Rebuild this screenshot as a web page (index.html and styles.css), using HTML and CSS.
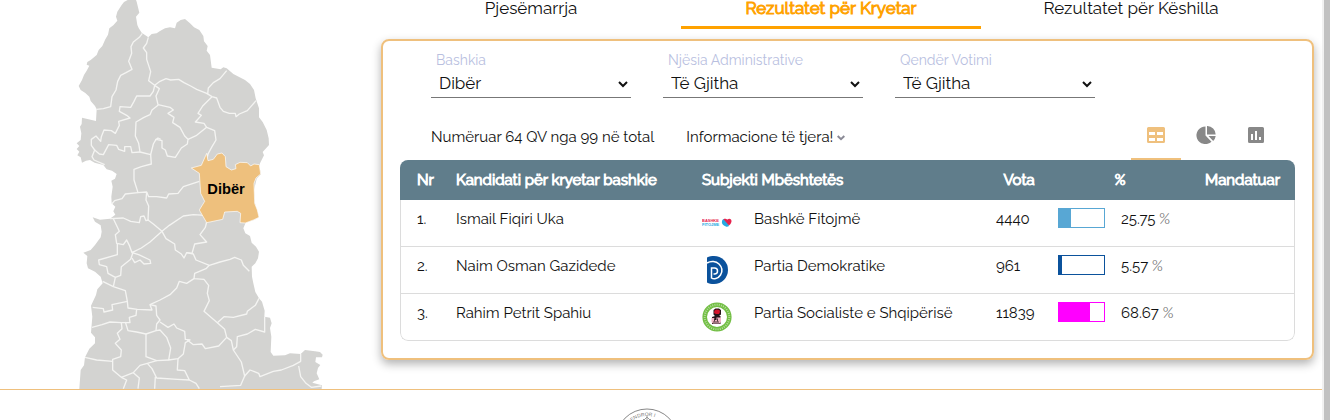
FILE: index.html
```html
<!DOCTYPE html>
<html lang="sq">
<head>
<meta charset="UTF-8" />
<meta name="viewport" content="width=device-width, initial-scale=1" />
<title>Rezultatet për Kryetar</title>
<link rel="stylesheet" href="styles.css">
</head>

<body>

<div class="page">
  <main class="main">

    <!-- Harta -->
    <div class="map-col">
      <svg class="map" viewBox="0 0 900 1167" role="img" aria-label="Harta e bashkive">
        <path class="land" d="M203 0L192 6 185 15 172 35 168 50 172 62 160 76 148 85 144 104 136 118 127 138 116 150 110 165 92 180 82 186 80 194 88 197 80 212 72 225 66 240 56 258 62 270 76 279 88 290 92 303 105 318 110 328 108 363 66 353 65 372 60 380 64 400 62 420 50 430 58 438 50 447 58 455 52 466 62 472 66 488 78 482 90 480 104 488 130 495 140 508 156 512 170 522 165 536 154 542 158 560 154 590 155 610 166 620 160 634 166 644 150 656 120 659 98 652 105 665 122 676 125 695 122 712 105 735 92 750 70 758 82 768 80 790 84 805 105 815 122 830 128 850 112 868 108 885 93 917 97 950 93 998 105 1012 105 1030 88 1046 75 1072 72 1096 62 1110 58 1167 785 1167 786 1156 757 1148 762 1144 778 1138 770 1120 774 1104 781 1095 766 1086 768 1072 786 1072 788 1064 780 1056 765 1054 735 1050 722 1062 690 1060 675 1066 640 1067 632 1056 634 1010 630 984 635 970 630 953 613 950 614 932 606 905 597 895 586 876 580 850 576 830 575 800 586 790 594 775 597 755 588 740 575 728 570 708 556 700 550 685 557 668 582 660 597 652 590 630 585 610 582 570 590 536 603 522 598 500 600 490 612 466 608 456 627 435 626 415 620 390 608 366 597 352 597 325 587 295 582 270 570 252 555 240 520 222 500 205 490 202 482 208 455 203 450 165 440 152 443 138 432 124 430 108 418 90 402 82 390 70 375 57 362 60 350 68 345 85 330 82 315 85 300 93 290 100 275 102 265 112 245 98 236 84 232 75 228 50 238 38 230 5 228 0Z"/>
        <g class="borders">
          <path d="M247 100L238 112 220 126 213 140 215 160 206 184 216 208 198 218 182 226 173 244 168 270 156 290 152 320 130 326 110 328"/>
          <path d="M265 112L260 130 250 144 260 158 260 178 272 215 266 242 284 256 300 244 318 236 332 240 356 238 372 248 392 258 410 268 440 280 456 290 470 294 480 322 490 334 508 340 526 340 528 350 538 342 562 332 588 302"/>
          <path d="M500 212L480 236 460 248 445 264 443 282"/>
          <path d="M284 256L280 274 270 288 230 288 222 304 212 322 180 320 178 334 200 346 210 354 176 364 178 376 166 400 154 392 132 390 124 410 122 424 108 408 94 418 94 436 104 450 96 470 102 480 134 494"/>
          <path d="M284 256L298 266 288 288 294 314 330 322 340 330 324 340 342 352 338 368 360 382 374 408 384 418 382 432 364 444 346 472 322 468 316 450 306 444 306 422 288 418 280 432 272 464 240 456 236 430 226 408 228 366 252 352 270 344 276 330 294 316"/>
          <path d="M286 420L294 414 302 418"/>
          <path d="M456 290L428 318 414 340 424 346 406 366 432 370 440 382 464 392 468 420 456 440 444 462 440 480"/>
          <path d="M440 382L410 406 384 418"/>
          <path d="M104 450L118 462 130 464 146 434 170 436 176 448 194 454 194 440 212 440 216 458 240 456"/>
          <path d="M272 464L274 492 244 500 222 508 222 540 234 578 260 576 266 590 290 590 320 594 326 582 354 580 370 560 418 544"/>
          <path d="M234 578L196 582 186 596 164 602 155 612"/>
          <path d="M260 576L258 600 266 618 264 660 280 672 306 694 328 676 370 648 400 644 438 646"/>
          <path d="M150 656L190 654 212 664 238 668 242 650 252 648 258 662 266 660"/>
          <path d="M160 656L178 694 166 704 170 730 190 734 200 720 208 736 216 758 244 744 270 726 306 694"/>
          <path d="M306 694L318 716 344 732 346 750 364 762 372 774 380 758 396 760 404 732 440 726 420 704 436 682 440 666"/>
          <path d="M380 758L400 762 408 780 448 796 480 786 510 778 524 772 544 780 550 796 568 814"/>
          <path d="M448 796L438 806 404 820 402 836 432 838 446 856 442 880 448 902 432 934 472 968 494 988 500 1012 514 1022 520 1050 544 1086 554 1128 542 1156 480 1160"/>
          <path d="M402 836L380 850 358 844 350 864 330 884 300 900 270 914 276 930 232 928 204 924 202 904 196 872 160 860 128 844"/>
          <path d="M172 730L172 764 116 780 118 794 140 800 144 820 166 832 160 860"/>
          <path d="M166 832L182 826 184 800 212 778 220 754"/>
          <path d="M216 758L236 764 270 780 272 790 252 792 240 780 224 788 216 774"/>
          <path d="M202 904L156 914 158 930 132 936 130 926 98 922"/>
          <path d="M230 928L228 946 208 952 210 968 184 968 150 966 126 974 96 982"/>
          <path d="M270 914L288 918 290 946 300 960 290 972 288 992 258 1002 230 996 204 992 196 966"/>
          <path d="M300 966L324 982 342 972 350 984 374 994 376 1018 390 1020 376 1028 370 1062 354 1076 326 1080 332 1044 320 1012 300 990 288 992"/>
          <path d="M258 1002L258 1070 290 1082 326 1080"/>
          <path d="M382 1020L400 1034 426 1032 436 1046 476 1038 500 1012"/>
          <path d="M184 968L186 986 172 1000 180 1018 166 1030 184 1050 182 1070 158 1078 158 1110 184 1132 220 1118 240 1096 262 1090 290 1082"/>
          <path d="M75 1072L110 1080 158 1084"/>
          <path d="M354 1076L352 1110 374 1112 388 1140 352 1138 290 1134 276 1106 262 1090"/>
          <path d="M388 1140L408 1150 418 1166M220 1118L238 1134 234 1166M184 1132L200 1140 190 1166M286 1130L284 1166"/>
          <path d="M472 968L492 950 520 952 560 942 562 934 586 916 597 895"/>
          <path d="M520 1050L530 1040 532 1010 562 1002 586 988 614 996 614 950"/>
          <path d="M554 1128L570 1110 596 1120 600 1130 640 1114 664 1110 700 1096 722 1084 722 1062"/>
          <path d="M716 1098L722 1130 738 1150 754 1162 784 1158"/>
        </g>
        <path class="diber" d="M440 460L444 482 460 478 472 462 486 459 496 470 498 500 514 510 528 506 526 494 540 487 562 488 572 498 582 492 598 494 602 522 588 534 582 550 584 610 592 630 597 652 580 660 556 669 540 668 542 640 532 634 494 636 488 658 440 668 426 644 418 630 434 604 422 580 418 520 394 504 424 496Z"/>
        <text class="map-label" x="442" y="582">Dibër</text>
      </svg>
    </div>

    <div class="content">
      <nav class="tabs">
        <a class="tab" href="#pjesemarrja">Pjesëmarrja</a>
        <a class="tab active" href="#kryetar">Rezultatet për Kryetar</a>
        <a class="tab" href="#keshilla">Rezultatet për Këshilla</a>
      </nav>

      <section class="panel">
        <form class="filters">
          <div class="field">
            <label for="bashkia">Bashkia</label>
            <select id="bashkia"><option>Dibër</option></select>
          </div>
          <div class="field">
            <label for="njesia">Njësia Administrative</label>
            <select id="njesia"><option>Të Gjitha</option></select>
          </div>
          <div class="field">
            <label for="qendra">Qendër Votimi</label>
            <select id="qendra"><option>Të Gjitha</option></select>
          </div>
        </form>

        <div class="info-row">
          <span>Numëruar 64 QV nga 99 në total</span>
          <button type="button" class="more">Informacione të tjera!
            <svg width="8" height="6" viewBox="0 0 8 6"><path d="M.7 1L4 4.200 7.300 1" fill="none" stroke="#8a8a96" stroke-width="2"/></svg>
          </button>
          <div class="views">
            <button type="button" class="view active" aria-label="Tabela">
              <svg width="18" height="16" viewBox="0 0 18 16"><path fill="currentColor" fill-rule="evenodd" d="M1.500 0h15A1.500 1.500 0 0 1 18 1.500v13a1.500 1.500 0 0 1-1.500 1.500h-15A1.500 1.500 0 0 1 0 14.500v-13A1.500 1.500 0 0 1 1.500 0zM2 5v3h6V5zM10 5v3h6V5zM2 11v3h6v-3zM10 11v3h6v-3z"/></svg>
            </button>
            <button type="button" class="view" aria-label="Grafik rrethor">
              <svg width="20" height="18" viewBox="0 0 20 18"><path fill="currentColor" d="M9.500 .5v9l6 6.300A9 8.800 0 1 1 9.500 .5zM11 0a8.500 8.500 0 0 1 8.700 8.500H11zM12.500 10h7.200a8.500 8.500 0 0 1-2.500 5z"/></svg>
            </button>
            <button type="button" class="view" aria-label="Grafik me shtylla">
              <svg width="16" height="16" viewBox="0 0 16 16"><path fill="currentColor" fill-rule="evenodd" d="M1.500 0h13A1.500 1.500 0 0 1 16 1.500v13a1.500 1.500 0 0 1-1.500 1.500h-13A1.500 1.500 0 0 1 0 14.500v-13A1.500 1.500 0 0 1 1.500 0zM3 7v6h2V7zM7 4v9h2V4zM11 10v3h2v-3z"/></svg>
            </button>
          </div>
        </div>

        <table class="results">
          <colgroup>
            <col class="c-nr"><col class="c-name"><col class="c-logo"><col class="c-party"><col class="c-votes"><col class="c-pct"><col class="c-mand">
          </colgroup>
          <thead>
            <tr>
              <th>Nr</th>
              <th>Kandidati për kryetar bashkie</th>
              <th colspan="2">Subjekti Mbështetës</th>
              <th class="center">Vota</th>
              <th class="center">%</th>
              <th class="center">Mandatuar</th>
            </tr>
          </thead>
          <tbody>
            <tr>
              <td>1.</td>
              <td>Ismail Fiqiri Uka</td>
              <td class="logo">
                <svg width="30" height="30" viewBox="0 0 30 30">
                  <text class="bf-red" x="0" y="14">BASHKË</text>
                  <text class="bf-blue" x="0" y="18">FITOJMË</text>
                  <path fill="#27a9e1" d="M20 13c1-3 4-2 5 0l2 5c-2 1.500-3.500 .5-5-.5s-2.500-2.500-2-4.500z"/>
                  <path fill="#e6224d" d="M21.500 11.200c2-1 3 .5 4 .2 2-1.500 4.200-.3 4 2-.3 2-1.500 3.300-2.500 4z"/>
                </svg>
              </td>
              <td>Bashkë Fitojmë</td>
              <td>4440</td>
              <td><div class="pct"><span class="bar sky"><i style="width: 25.75%"></i></span><span>25.75 <small>%</small></span></div></td>
              <td></td>
            </tr>
            <tr>
              <td>2.</td>
              <td>Naim Osman Gazidede</td>
              <td class="logo">
                <svg width="30" height="30" viewBox="0 0 30 30">
                  <path fill="#0b529c" d="M5 2.500C7 1 10 1 12 1a14 14 0 0 1 0 28c-3 0-5-.5-7-1.500z"/>
                  <path fill="none" stroke="#fff" stroke-width="1.500" d="M5 8C9 5.500 14 6 17 9s4 7 1.500 11-7 4.500-9 3V13h3c4 0 4 6 0 6h-1"/>
                </svg>
              </td>
              <td>Partia Demokratike</td>
              <td>961</td>
              <td><div class="pct"><span class="bar navy"><i style="width: 5.57%"></i></span><span>5.57 <small>%</small></span></div></td>
              <td></td>
            </tr>
            <tr>
              <td>3.</td>
              <td>Rahim Petrit Spahiu</td>
              <td class="logo">
                <svg width="30" height="30" viewBox="0 0 30 30">
                  <circle cx="15" cy="15" r="12.300" fill="#fff" stroke="#72be44" stroke-width="4.600"/>
                  <circle cx="15" cy="15" r="12.300" fill="none" stroke="#b5dd9b" stroke-width="2" stroke-dasharray="1 1.200"/>
                  <path fill="#26151a" d="M11.500 8l2-1.500h3.500l2 1.500v4.500l-2 1.500h1.500v8h-8.500v-7l3-1-1.500-1.500z"/>
                  <path fill="#d3142c" d="M12.500 8.500l2-1 3 .5.500 2-1 2h-3l-2-1z"/>
                  <path fill="#f1b3c4" d="M9.500 16h3v2h2v-2.500h4.500v4.500l-1.500 1.500H11l-1.500-1.500z"/>
                  <path stroke="#26151a" stroke-width=".8" d="M12.500 16.500v3M15.500 16.500v3M11 20h6"/>
                </svg>
              </td>
              <td>Partia Socialiste e Shqipërisë</td>
              <td>11839</td>
              <td><div class="pct"><span class="bar magenta"><i style="width: 68.67%"></i></span><span>68.67 <small>%</small></span></div></td>
              <td></td>
            </tr>
          </tbody>
        </table>
      </section>
    </div>
  </main>

  <footer class="footer">
    <svg width="64" height="64" viewBox="0 0 64 64" role="img" aria-label="Komisioni Qendror i Zgjedhjeve">
      <defs><path id="ring" d="M8 32a24 24 0 0 1 48 0"/></defs>
      <circle cx="32" cy="32" r="31" fill="none" stroke="#888" stroke-width="1"/>
      <text class="seal-text"><textPath href="#ring" startOffset="17">QENDROR  I</textPath></text>
      <path fill="none" stroke="#999" d="M29 12l3-3 3 3M32 8v4M26 14l3-3M35 11l3 3"/>
    </svg>
  </footer>
</div>

</body>
</html>
```

FILE: styles.css
```css
:root {
  --accent: #efc07d;
  --orange: #ffa200;
  --header: #607d8b;
  --line: #dcdcdc;
}

*, *::before, *::after {
  box-sizing: border-box;
}
html, body {
  margin: 0;
  height: 100%;
  overflow: hidden;
}
body {
  font-family: Raleway, Lato, sans-serif;
  font-size: 15px;
  line-height: 24px;
  color: #111;
  background: #fff;
}
button, select {
  font: inherit;
  color: inherit;
  background: none;
  border: 0;
  padding: 0;
}

.page {
  min-height: 100%;
  border-right: 6px solid #c1c1c1;
  box-shadow: inset -2px 0 #f1f1f1;
}
.main {
  display: flex;
  margin-right: 2px;
  border-bottom: 1px solid var(--accent);
}

/* Map */
.map-col {
  flex: 0 0 381px;
  padding-left: 60px;
}
.map {
  display: block;
  width: 300px;
  height: 389px;
}
.land { fill: #d3d3d1; }
.borders {
  fill: none;
  stroke: #f4f4f2;
  stroke-width: 4;
  stroke-linejoin: round;
}
.diber {
  fill: #eec07d;
  stroke: #fff;
  stroke-width: 2;
}
.map-label {
  font: bold 44px "Liberation Sans", Arial, sans-serif;
}

/* Tabs */
.content {
  flex: 1;
  min-width: 0;
  padding-right: 8px;
}
.tabs {
  display: flex;
  height: 29px;
  margin-bottom: 10px;
}
.tab {
  flex: 0 1 300px;
  padding-bottom: 6px;
  display: flex;
  align-items: flex-end;
  justify-content: center;
  border-bottom: 3px solid transparent;
  font-size: 17px;
  color: inherit;
  text-decoration: none;
}
.tab.active {
  color: var(--orange);
  border-color: var(--orange);
  -webkit-text-stroke: 1px;
}

/* Results panel */
.panel {
  padding: 8px 17px 17px;
  border: 2px solid var(--accent);
  border-radius: 8px;
  box-shadow: 0 4px 10px rgba(0, 0, 0, 0.3);
}
.filters {
  display: flex;
  gap: 32px;
  padding: 0 31px;
}
.field {
  flex: 0 1 200px;
}
.field label {
  display: block;
  padding-left: 5px;
  line-height: 22px;
  font-size: 14px;
  color: #b9bfdf;
}
.field select {
  display: block;
  width: 100%;
  height: 27px;
  padding: 0 0 2px 4px;
  border-bottom: 1px solid #777;
  border-radius: 0;
  font-size: 17px;
}
.info-row {
  display: flex;
  align-items: center;
  gap: 32px;
  height: 62px;
  padding: 16px 14px 0 31px;
}
.more svg {
  vertical-align: middle;
}
.views {
  display: flex;
  margin-left: auto;
  align-self: stretch;
}
.view {
  display: flex;
  align-items: center;
  justify-content: center;
  width: 50px;
  padding-bottom: 2px;
  border-bottom: 2px solid transparent;
  color: #888;
}
.view.active {
  color: var(--accent);
  border-color: var(--accent);
}

/* Table */
.results {
  width: 100%;
  table-layout: fixed;
  border-collapse: separate;
  border-spacing: 0;
  border-radius: 8px;
  overflow: hidden;
}
.c-nr { width: 48px; }
.c-name { width: 246px; }
.c-logo { width: 52px; }
.c-votes { width: 62px; }
.c-pct { width: 140px; }
.c-mand { width: 105px; }
.results th {
  height: 40px;
  padding: 0 8px;
  background: var(--header);
  color: #fff;
  font-weight: 400;
  -webkit-text-stroke: 1px;
  text-align: left;
}
.results .center {
  text-align: center;
}
.results td {
  height: 47px;
  padding: 7px 8px 0;
  vertical-align: top;
  border-bottom: 1px solid var(--line);
}
.results tr > :first-child {
  padding-left: 17px;
}
.results td:first-child {
  padding-left: 16px;
  border-left: 1px solid var(--line);
}
.results td:last-child {
  border-right: 1px solid var(--line);
}
.results tbody tr:last-child td:first-child {
  border-bottom-left-radius: 8px;
}
.results tbody tr:last-child td:last-child {
  border-bottom-right-radius: 8px;
}
.results .logo {
  padding-top: 8px;
}
.results .logo svg {
  display: block;
}
.bf-red, .bf-blue {
  font: bold 4px "Liberation Sans", Arial, sans-serif;
  fill: #e6224d;
}
.bf-blue { fill: #27a9e1; }
.pct {
  display: flex;
  gap: 16px;
}
.pct small {
  font-size: 15px;
  color: #777;
}
.bar {
  width: 47px;
  height: 20px;
  margin-top: 1px;
  border: 1px solid;
}
.bar i {
  display: block;
  height: 100%;
  background: currentColor;
}
.sky { color: #58a7d4; }
.navy { color: #0b529c; }
.magenta { color: #f0f; }

/* Footer */
.footer {
  display: flex;
  justify-content: center;
  padding: 18px 30px 0 0;
}
.seal-text {
  font: 5px "Liberation Sans", Arial, sans-serif;
  fill: #777;
}
```
